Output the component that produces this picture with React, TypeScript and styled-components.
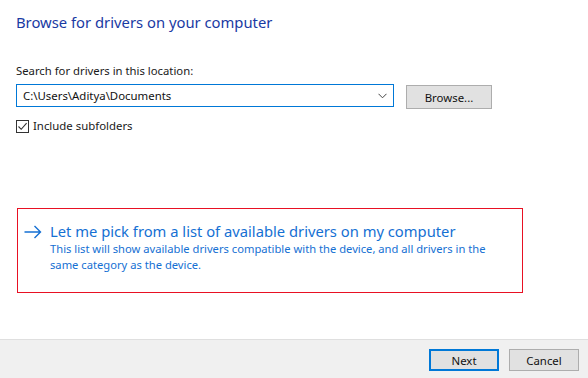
import React, { useState } from 'react';
import styled, { createGlobalStyle } from 'styled-components';

const GlobalStyle = createGlobalStyle`
  html, body {
    margin: 0;
    padding: 0;
    background: #ffffff;
  }
  body {
    font-family: "Noto Sans", "Open Sans", sans-serif;
    color: #1a1a1a;
  }
`;

const BrowseDrivers: React.FC = () => {
  const [path, setPath] = useState('C:\\Users\\Aditya\\Documents');
  const [subfolders, setSubfolders] = useState(true);

  return (
    <Page>
      <GlobalStyle />
      <Content>
        <Title>Browse for drivers on your computer</Title>

        <Label>Search for drivers in this location:</Label>
        <PathRow>
          <Combo>
            <ComboInput value={path} onChange={(e) => setPath(e.target.value)} />
            <Chevron width="9" height="6" viewBox="0 0 9 6">
              <path d="M0.5 0.8 L4.5 4.8 L8.5 0.8" fill="none" stroke="#444" strokeWidth="1" />
            </Chevron>
          </Combo>
          <BrowseButton>Browse...</BrowseButton>
        </PathRow>

        <CheckRow onClick={() => setSubfolders(!subfolders)}>
          <CheckBox>
            {subfolders && (
              <svg width="11" height="11" viewBox="0 0 11 11">
                <path d="M1.5 5.5 L4.2 8.3 L9.6 2.2" fill="none" stroke="#333" strokeWidth="1.1" />
              </svg>
            )}
          </CheckBox>
          <span>Include subfolders</span>
        </CheckRow>

        {/* 목록에서 직접 고르기 */}
        <OptionBox>
          <Arrow width="18" height="14" viewBox="0 0 18 14">
            <path d="M0.5 7 H16.5 M10.5 1 L16.5 7 L10.5 13" fill="none" stroke="#1570d3" strokeWidth="1.4" />
          </Arrow>
          <OptionText>
            <OptionTitle>Let me pick from a list of available drivers on my computer</OptionTitle>
            <OptionDesc>
              This list will show available drivers compatible with the device, and all drivers in the
              <br />
              same category as the device.
            </OptionDesc>
          </OptionText>
        </OptionBox>
      </Content>

      <Footer>
        <FooterButton primary>Next</FooterButton>
        <FooterButton>Cancel</FooterButton>
      </Footer>
    </Page>
  );
};

const Page = styled.div`
  display: flex;
  flex-direction: column;
  height: 100vh;
`;

const Content = styled.div`
  flex: 1;
  padding: 10px 16px 0;
`;

const Title = styled.h1`
  margin: 0;
  font-size: 14.8px;
  font-weight: 400;
  line-height: 24px;
  color: #1a3aa3;
`;

const Label = styled.div`
  margin-top: 29px;
  font-size: 11.3px;
  line-height: 16px;
`;

const PathRow = styled.div`
  display: flex;
  align-items: flex-start;
  margin-top: 5px;
`;

const Combo = styled.div`
  position: relative;
  width: 378px;
  height: 23px;
  box-sizing: border-box;
  border: 1px solid #0078d7;
  display: flex;
  align-items: center;
`;

const ComboInput = styled.input`
  flex: 1;
  border: none;
  outline: none;
  padding: 0 0 0 6px;
  font-family: inherit;
  font-size: 11.4px;
  color: #111;
  background: transparent;
`;

const Chevron = styled.svg`
  margin-right: 6px;
`;

const BrowseButton = styled.button`
  margin: 1px 0 0 12px;
  width: 86px;
  height: 24px;
  box-sizing: border-box;
  border: 1px solid #adadad;
  background: #e1e1e1;
  font-family: inherit;
  font-size: 11.4px;
  color: #111;
  padding: 0;
`;

const CheckRow = styled.label`
  display: flex;
  align-items: center;
  gap: 4px;
  margin-top: 10px;
  font-size: 11.4px;
  line-height: 14px;
  cursor: default;
`;

const CheckBox = styled.span`
  width: 13px;
  height: 13px;
  box-sizing: border-box;
  border: 1px solid #333;
  display: flex;
  align-items: center;
  justify-content: center;
  background: #fff;
`;

const OptionBox = styled.div`
  display: flex;
  align-items: flex-start;
  margin: 75px 0 0 1px;
  width: 506px;
  height: 85px;
  box-sizing: border-box;
  border: 1px solid #e81123;
  padding: 13px 8px 0 6px;
`;

const Arrow = styled.svg`
  margin-top: 3px;
  flex-shrink: 0;
`;

const OptionText = styled.div`
  margin-left: 8px;
  color: #1570d3;
`;

const OptionTitle = styled.div`
  font-size: 14.75px;
  line-height: 18px;
`;

const OptionDesc = styled.div`
  font-size: 11.2px;
  line-height: 16px;
  margin-top: 1px;
`;

const Footer = styled.div`
  height: 39px;
  box-sizing: border-box;
  border-top: 1px solid #dfdfdf;
  background: #f0f0f0;
  display: flex;
  justify-content: flex-end;
  align-items: flex-start;
  gap: 10px;
  padding: 9px 9px 0 0;
`;

const FooterButton = styled.button<{ primary?: boolean }>`
  width: 70px;
  height: 22px;
  box-sizing: border-box;
  border: ${(p) => (p.primary ? '2px solid #0078d7' : '1px solid #adadad')};
  background: #e1e1e1;
  font-family: inherit;
  font-size: 11.4px;
  color: #111;
  padding: 0;
`;

export default BrowseDrivers;
